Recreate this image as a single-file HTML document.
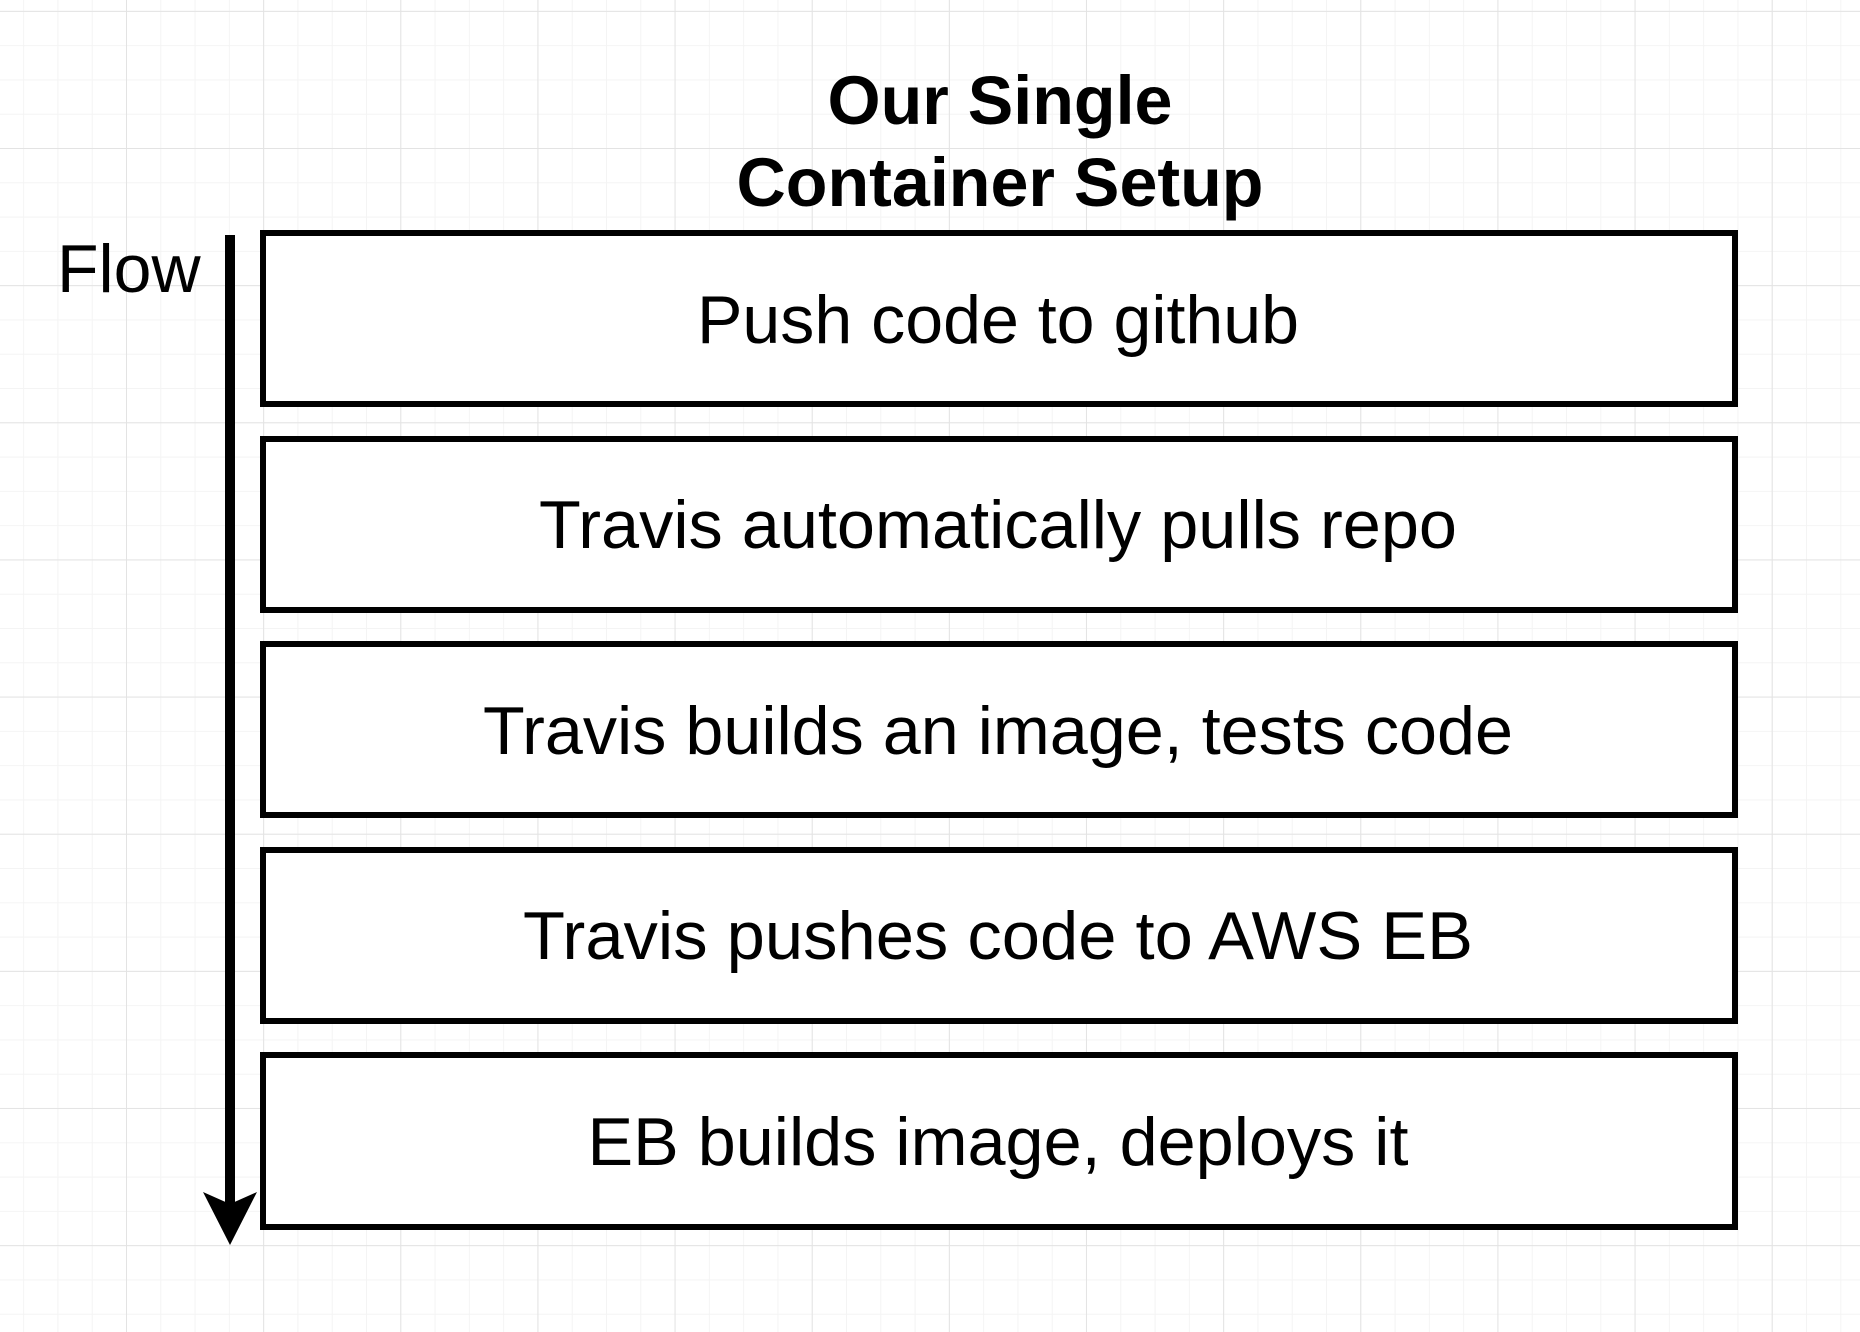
<!DOCTYPE html>
<html><head><meta charset="utf-8"><style>
html,body{margin:0;padding:0;background:#fff}
svg{display:block}
text{font-family:"Liberation Sans",Arial,sans-serif;fill:#000}
</style></head><body>
<svg width="1860" height="1332" viewBox="0 0 1860 1332" xmlns="http://www.w3.org/2000/svg">
<defs>
<pattern id="minor" x="23.14" y="10.86" width="34.286" height="34.286" patternUnits="userSpaceOnUse">
<path d="M0 0H34.286M0 0V34.286" stroke="#f4f4f4" stroke-width="2" fill="none"/>
</pattern>
<pattern id="major" x="126" y="148" width="137.14" height="137.14" patternUnits="userSpaceOnUse">
<path d="M0 0H137.14M0 0V137.14" stroke="#e3e3e3" stroke-width="2" fill="none"/>
</pattern>
</defs>
<rect width="1860" height="1332" fill="#fff"/>
<rect width="1860" height="1332" fill="url(#minor)"/>
<rect width="1860" height="1332" fill="url(#major)"/>

<text x="1000" y="124" font-size="69" font-weight="bold" text-anchor="middle" textLength="345" lengthAdjust="spacingAndGlyphs">Our Single</text>
<text x="1000" y="206" font-size="69" font-weight="bold" text-anchor="middle" textLength="527" lengthAdjust="spacingAndGlyphs">Container Setup</text>

<text x="57" y="292" font-size="68">Flow</text>
<rect x="225" y="235" width="10" height="970" fill="#000"/>
<path d="M203 1192 L230 1204 L257 1192 L230 1245 Z" fill="#000"/>

<g fill="#fff" stroke="#000" stroke-width="6">
<rect x="263" y="233" width="1472" height="171"/>
<rect x="263" y="439" width="1472" height="171"/>
<rect x="263" y="644" width="1472" height="171"/>
<rect x="263" y="850" width="1472" height="171"/>
<rect x="263" y="1055" width="1472" height="172"/>
</g>
<g font-size="68" text-anchor="middle">
<text x="998" y="343" textLength="602" lengthAdjust="spacingAndGlyphs">Push code to github</text>
<text x="998" y="548" textLength="918" lengthAdjust="spacingAndGlyphs">Travis automatically pulls repo</text>
<text x="998" y="754" textLength="1030" lengthAdjust="spacingAndGlyphs">Travis builds an image, tests code</text>
<text x="998" y="959" textLength="950" lengthAdjust="spacingAndGlyphs">Travis pushes code to AWS EB</text>
<text x="998" y="1165" textLength="821" lengthAdjust="spacingAndGlyphs">EB builds image, deploys it</text>
</g>
</svg>
</body></html>
